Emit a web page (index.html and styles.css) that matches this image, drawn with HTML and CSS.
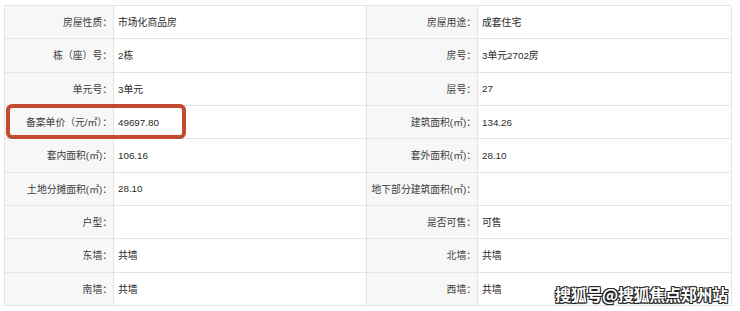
FILE: index.html
```html
<!DOCTYPE html>
<html lang="zh-CN">
<head>
<meta charset="utf-8">
<title>房屋信息</title>
<link rel="stylesheet" href="styles.css">
</head>
<body>
<div class="page">
  <div class="info-grid">
    <div class="lbl">房屋性质：</div><div class="val">市场化商品房</div>
    <div class="lbl">房屋用途：</div><div class="val">成套住宅</div>

    <div class="lbl">栋（座）号：</div><div class="val">2栋</div>
    <div class="lbl">房号：</div><div class="val">3单元2702房</div>

    <div class="lbl">单元号：</div><div class="val">3单元</div>
    <div class="lbl">层号：</div><div class="val">27</div>

    <div class="lbl">备案单价（元/㎡）：</div><div class="val">49697.80</div>
    <div class="lbl">建筑面积(㎡)：</div><div class="val">134.26</div>

    <div class="lbl">套内面积(㎡)：</div><div class="val">106.16</div>
    <div class="lbl">套外面积(㎡)：</div><div class="val">28.10</div>

    <div class="lbl">土地分摊面积(㎡)：</div><div class="val">28.10</div>
    <div class="lbl">地下部分建筑面积(㎡)：</div><div class="val"></div>

    <div class="lbl">户型：</div><div class="val"></div>
    <div class="lbl">是否可售：</div><div class="val">可售</div>

    <div class="lbl">东墙：</div><div class="val">共墙</div>
    <div class="lbl">北墙：</div><div class="val">共墙</div>

    <div class="lbl">南墙：</div><div class="val">共墙</div>
    <div class="lbl">西墙：</div><div class="val">共墙</div>
  </div>
  <div class="highlight"></div>
  <div class="watermark">搜狐号@搜狐焦点郑州站</div>
</div>
</body>
</html>
```
FILE: styles.css
```css
html, body {
  margin: 0;
  padding: 0;
  background: #ffffff;
}

.page {
  position: relative;
  width: 740px;
  height: 311px;
  padding: 5px 0 0 4px;
  box-sizing: border-box;
  font-family: "Liberation Sans", "Noto Sans CJK SC", sans-serif;
  font-size: 9.8px;
  color: #333333;
}

.info-grid {
  width: 727px;
  display: grid;
  grid-template-columns: 109px 253px 111px 254px;
  grid-auto-rows: 33.33px;
  border-top: 1px solid #e4e4e4;
  border-left: 1px solid #e4e4e4;
  box-sizing: border-box;
}

.lbl,
.val {
  display: flex;
  align-items: center;
  border-right: 1px solid #e4e4e4;
  border-bottom: 1px solid #e4e4e4;
  white-space: nowrap;
  overflow: hidden;
}

.lbl {
  justify-content: flex-end;
  background: #f7f7f7;
  color: #3c3c3c;
  padding-right: 1px;
}

.val {
  background: #ffffff;
  padding-left: 4px;
  color: #2a2a2a;
}

.highlight {
  position: absolute;
  left: 6px;
  top: 104px;
  width: 180px;
  height: 35px;
  box-sizing: border-box;
  border: 4px solid #c24a31;
  border-radius: 6px;
}

.watermark {
  position: absolute;
  left: 555px;
  top: 284px;
  font-family: "Noto Sans CJK SC", sans-serif;
  font-weight: 700;
  font-size: 16px;
  line-height: 20px;
  color: #ffffff;
  letter-spacing: -0.3px;
  text-shadow: 1px 1px 0 #222, -1px -1px 0 #222, 1px -1px 0 #222, -1px 1px 0 #222, 0 1px 1px #000;
}
```
